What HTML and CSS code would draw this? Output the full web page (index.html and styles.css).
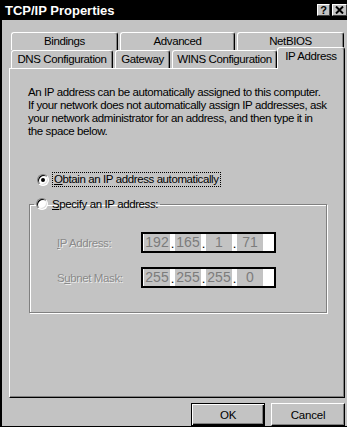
FILE: index.html
```html
<!DOCTYPE html>
<html lang="en">
<head>
  <meta charset="UTF-8">
  <title>TCP/IP Properties</title>
  <link rel="stylesheet" href="styles.css">
</head>
<body>
  <div class="window">
    <div class="titlebar">
      <span class="title">TCP/IP Properties</span>
      <span class="cap-btn help">?</span>
      <span class="cap-btn close">
        <svg width="9" height="8" viewBox="0 0 9 8"><path d="M1 0.5 L8 7.5 M8 0.5 L1 7.5" stroke="#000" stroke-width="2"/></svg>
      </span>
    </div>

    <div class="tabs">
      <div class="tab-row back">
        <div class="tab t-bind">Bindings</div>
        <div class="tab t-adv">Advanced</div>
        <div class="tab t-net">NetBIOS</div>
      </div>
      <div class="tab-row front">
        <div class="tab t-dns">DNS Configuration</div>
        <div class="tab t-gw">Gateway</div>
        <div class="tab t-wins">WINS Configuration</div>
        <div class="tab active">IP Address</div>
      </div>
    </div>

    <div class="panel">
      <p class="intro">
        An IP address can be automatically assigned to this computer.<br>
        If your network does not automatically assign IP addresses, ask<br>
        your network administrator for an address, and then type it in<br>
        the space below.
      </p>

      <div class="radio-row">
        <span class="radio checked"></span>
        <span class="focus"><u>O</u>btain an IP address automatically</span>
      </div>

      <fieldset class="group">
        <legend class="group-title">
          <span class="radio"></span>
          <span><u>S</u>pecify an IP address:</span>
        </legend>

        <div class="field-row">
          <span class="field-label"><u>I</u>P Address:</span>
          <div class="ip-box">
            <span class="octet">192</span><span class="dot">.</span><span class="octet">165</span><span class="dot">.</span><span class="octet">1</span><span class="dot">.</span><span class="octet">71</span>
          </div>
        </div>

        <div class="field-row">
          <span class="field-label">S<u>u</u>bnet Mask:</span>
          <div class="ip-box">
            <span class="octet">255</span><span class="dot">.</span><span class="octet">255</span><span class="dot">.</span><span class="octet">255</span><span class="dot">.</span><span class="octet">0</span>
          </div>
        </div>
      </fieldset>
    </div>

    <div class="buttons">
      <button class="btn default">OK</button>
      <button class="btn">Cancel</button>
    </div>
  </div>
</body>
</html>
```

FILE: styles.css
```css
* {
  box-sizing: border-box;
}

body {
  margin: 0;
  width: 347px;
  height: 427px;
  overflow: hidden;
  background-color: #c3c3c3;
  font-family: "Liberation Sans", Arial, sans-serif;
  font-size: 11.5px;
  letter-spacing: -0.4px;
  color: #000;
}

.window {
  width: 354px;
  height: 427px;
  border-left: 2px solid #000;
  border-bottom: 1px solid #000;
  background-color: #c3c3c3;
}

/* title bar */
.titlebar {
  height: 20px;
  background-color: #000;
  color: #fff;
  display: flex;
  align-items: center;
  padding-left: 3px;
}

.title {
  font-weight: bold;
  font-size: 13px;
  letter-spacing: 0;
  flex: 1;
}

.cap-btn {
  width: 13px;
  height: 12px;
  background-color: #c3c3c3;
  border: 1px solid;
  border-color: #fff #404040 #404040 #fff;
  display: flex;
  align-items: center;
  justify-content: center;
  font-weight: bold;
  font-size: 11px;
  letter-spacing: 0;
  color: #000;
  margin-right: 2px;
}

.cap-btn.close {
  width: 15px;
  margin-right: 7px;
}

/* tabs */
.tabs {
  padding: 12px 0 0 9px;
}

.tab-row {
  display: flex;
  height: 18px;
}

.tab-row.back {
  gap: 2px;
}

.tab-row.front {
  align-items: flex-end;
}

.tab {
  height: 18px;
  border: 1px solid;
  border-color: #fff #000 transparent #fff;
  border-bottom: none;
  border-radius: 3px 3px 0 0;
  box-shadow: inset -1px 0 #808080;
  background-color: #c3c3c3;
  text-align: center;
  line-height: 16px;
  white-space: nowrap;
}

.t-bind { width: 107px; }
.t-adv { width: 115px; }
.t-net { width: 107px; }

.t-dns { width: 102px; margin-right: 2px; }
.t-gw { width: 55px; margin-right: 2px; }
.t-wins { width: 105px; }

.tab.active {
  width: 68px;
  height: 22px;
  margin-bottom: -1px;
  line-height: 17px;
  position: relative;
  z-index: 1;
}

/* page */
.panel {
  margin-left: 7px;
  width: 336px;
  height: 330px;
  border: 1px solid;
  border-color: #fff #000 #000 #fff;
  box-shadow: inset -1px -1px #808080;
  padding: 17px 0 0 18px;
}

.intro {
  margin: 0;
  line-height: 13px;
}

.radio-row {
  display: flex;
  align-items: center;
  margin: 34px 0 0 9px;
  height: 15px;
}

.radio {
  width: 12px;
  height: 12px;
  border-radius: 50%;
  border: 1px solid;
  border-color: #808080 #fff #fff #808080;
  box-shadow: inset 1px 1px #000, inset -1px -1px #dfdfdf;
  background-color: #fff;
  margin-right: 3px;
  display: flex;
  align-items: center;
  justify-content: center;
  flex-shrink: 0;
}

.radio.checked::after {
  content: "";
  width: 4px;
  height: 4px;
  border-radius: 50%;
  background-color: #000;
}

.focus {
  border: 1px dotted #000;
  padding: 0 1px;
  line-height: 13px;
}

/* group box */
.group {
  margin: 10px 0 0 1px;
  width: 298px;
  padding: 21px 0 24px 0;
  border: 1px solid #808080;
  box-shadow: inset 1px 1px #fff, 1px 1px #fff;
}

.group-title {
  display: flex;
  align-items: center;
  margin-left: 4px;
  padding: 0 2px 0 2px;
  height: 14px;
  line-height: 14px;
}

.group-title .radio {
  margin-right: 4px;
}

.field-row {
  display: flex;
  align-items: center;
  height: 21px;
  margin-left: 27px;
}

.field-row + .field-row {
  margin-top: 14px;
}

.field-label {
  width: 84px;
  color: #8a8a8a;
  text-shadow: 1px 1px 0 #ececec;
}

.ip-box {
  width: 135px;
  height: 21px;
  border: 2px solid #000;
  background-color: #fff;
  display: flex;
  padding: 0 4px 0 1px;
}

.octet {
  width: 26px;
  background-color: #c3c3c3;
  color: #7c7c7c;
  font-size: 14px;
  letter-spacing: 0;
  line-height: 17px;
  text-align: center;
}

.dot {
  width: 5px;
  font-size: 13px;
  letter-spacing: 0;
  line-height: 19px;
  text-align: center;
  color: #000;
}

/* buttons */
.buttons {
  width: 343px;
  display: flex;
  justify-content: flex-end;
  gap: 6px;
  margin-top: 5px;
}

.btn {
  width: 74px;
  height: 23px;
  background-color: #c3c3c3;
  border: 1px solid;
  border-color: #fff #000 #000 #fff;
  box-shadow: inset -1px -1px #808080;
  font-family: "Liberation Sans", Arial, sans-serif;
  font-size: 11.5px;
  letter-spacing: -0.2px;
  color: #000;
  padding: 0;
}

.btn.default {
  border-color: #000;
  box-shadow: inset 1px 1px #fff, inset -1px -1px #000, inset -2px -2px #808080;
}
```
